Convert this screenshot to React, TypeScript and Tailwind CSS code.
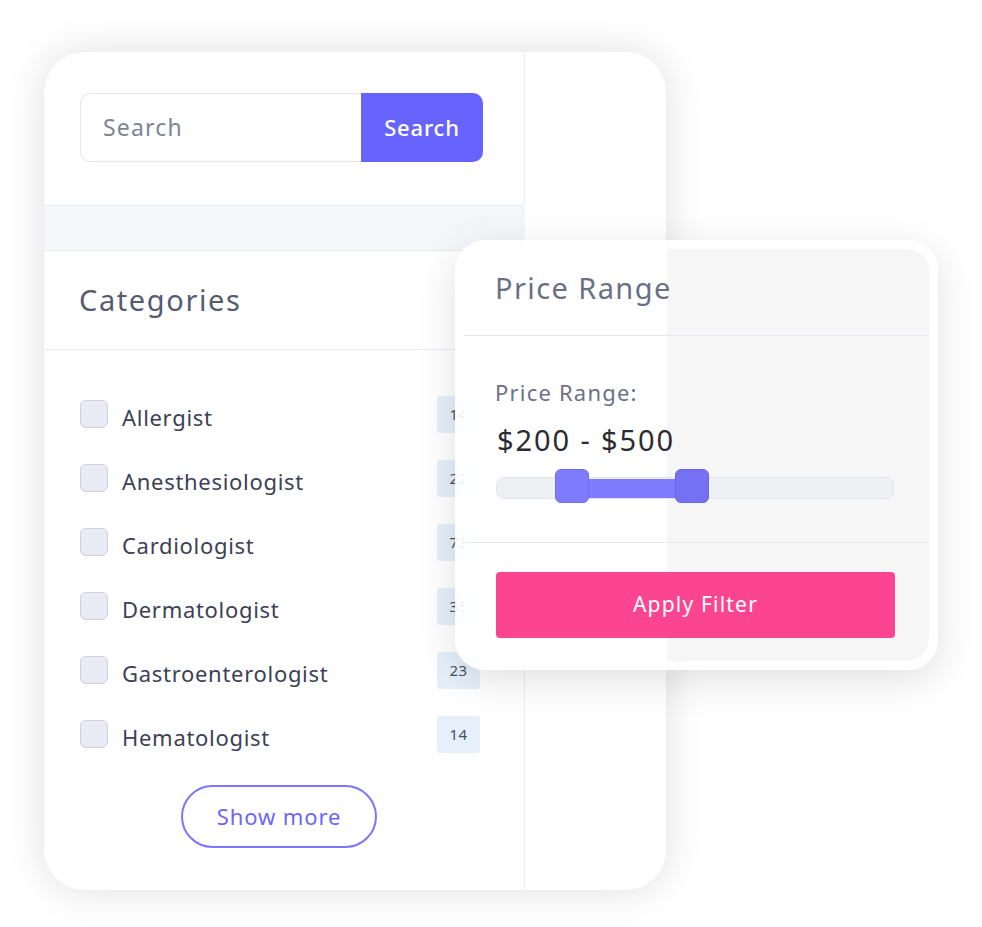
const categories = [
  { name: "Allergist", count: 14 },
  { name: "Anesthesiologist", count: 22 },
  { name: "Cardiologist", count: 73 },
  { name: "Dermatologist", count: 35 },
  { name: "Gastroenterologist", count: 23 },
  { name: "Hematologist", count: 14 },
];

const body = "font-['Noto_Sans','Open_Sans',sans-serif]";
const heading = "font-['Noto_Sans','Lato',sans-serif]";

const PriceRange = () => (
  <div className="absolute left-[455px] top-[240px] w-[483px] h-[430px] p-[9px] rounded-[30px] bg-white/90 shadow-[0_10px_40px_rgba(0,0,0,0.12)]">
    <div className="h-full rounded-[22px] bg-[linear-gradient(to_right,rgba(255,255,255,0.82)_203px,#f6f6f7_203px)] flex flex-col">
      <div className="h-[87px] border-b border-[#e6e8ef] flex items-center px-[31px] pb-[8px]">
        <h3 className={`${heading} text-[29px] tracking-[1.4px] text-[#6b6f85]`}>Price Range</h3>
      </div>
      <div className="h-[207px] border-b border-[#e8eaf0] px-[31px] pt-[45px]">
        <p className={`${heading} text-[22px] tracking-[1.2px] leading-none text-[#6d7186]`}>Price Range:</p>
        <p className={`${heading} text-[29px] tracking-[1.9px] leading-none text-[#2b2b33] mt-[22px] ml-[2px]`}>$200 - $500</p>
        <div className="relative mt-[23px] ml-[1px] h-[22px] w-[398px] rounded-[8px] border border-[#e3e5ec] bg-[#eff0f4]">
          <div className="absolute left-[92px] top-[1px] h-[19px] w-[88px] bg-[#7f7bfd]" />
          <div className="absolute left-[58px] top-[-9px] h-[34px] w-[34px] rounded-[6px] border border-[#6f6bf2] bg-[#7f7bfd]" />
          <div className="absolute left-[178px] top-[-9px] h-[34px] w-[34px] rounded-[6px] border border-[#6a66ea] bg-[#7571f2]" />
        </div>
      </div>
      <div className="px-[32px] pt-[29px]">
        <button className={`${body} h-[66px] w-[399px] rounded-[4px] bg-[#fc4590] text-white text-[21px] tracking-[1.2px]`}>
          Apply Filter
        </button>
      </div>
    </div>
  </div>
);

export default function App() {
  return (
    <div className="relative w-[982px] h-[927px] bg-white pl-[44px] pt-[52px]">
      <div className="w-[622px] h-[838px] rounded-[40px] bg-white shadow-[0_0_40px_rgba(0,0,0,0.13)] overflow-hidden flex">
        <div className="w-[481px] flex flex-col">
          <div className="h-[154px] border-r border-b border-[#e8ebf2] rounded-br-[4px] px-[36px] pt-[41px]">
            <div className="flex h-[69px] w-[403px]">
              <input
                placeholder="Search"
                className={`${body} flex-1 min-w-0 rounded-l-[10px] border border-r-0 border-[#e4e7ef] px-[22px] text-[23px] tracking-[1.2px] text-[#555] placeholder:text-[#7e8494] outline-none`}
              />
              <button className={`${body} w-[122px] rounded-r-[10px] bg-[#6763fe] text-white text-[22px] tracking-[0.8px] font-medium`}>
                Search
              </button>
            </div>
          </div>
          <div className="h-[44px] bg-[#f5f6fa]" />
          <div className="flex-1 border-t border-r border-[#e8ebf2] flex flex-col">
            <div className="h-[99px] border-b border-[#e8ebf2] flex items-center px-[35px]">
              <h2 className={`${heading} text-[29px] tracking-[1.6px] text-[#565b70]`}>Categories</h2>
            </div>
            <ul className="pt-[32px] pl-[36px] pr-[44px]">
              {categories.map((c) => (
                <li key={c.name} className="h-[64px] flex items-center">
                  <span className="w-[28px] h-[28px] rounded-[6px] border border-[#ccd0de] bg-[#e8eaf4]" />
                  <span className={`${body} ml-[14px] text-[22px] tracking-[0.7px] text-[#3d4155] mt-[6px]`}>{c.name}</span>
                  <span className={`${body} ml-auto w-[43px] h-[37px] rounded-[3px] bg-[#e5f0fb] text-[15px] tracking-[0.5px] text-[#4a5060] flex items-center justify-center`}>
                    {c.count}
                  </span>
                </li>
              ))}
            </ul>
            <div className="pt-[19px] pl-[137px]">
              <button className={`${body} w-[196px] h-[63px] rounded-full border-2 border-[#7b76fb] text-[22px] tracking-[0.9px] text-[#6c66fa]`}>
                Show more
              </button>
            </div>
          </div>
        </div>
      </div>
      <PriceRange />
    </div>
  );
}
